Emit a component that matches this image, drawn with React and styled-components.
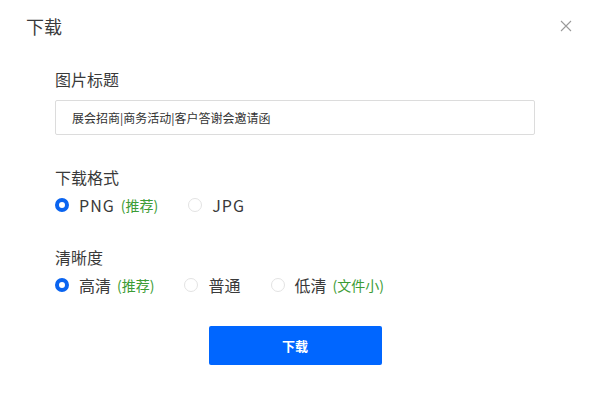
import React, { useState } from "react";
import styled, { createGlobalStyle } from "styled-components";

const Global = createGlobalStyle`
  html, body { margin: 0; padding: 0; background: #fff; }
  body { font-family: "Noto Sans CJK SC", "Noto Sans", sans-serif; color: #333; }
`;

const Dialog = styled.div`
  width: 593px;
  height: 399px;
  box-sizing: border-box;
  padding: 12px 0 0 0;
  display: flex;
  flex-direction: column;
`;

const Header = styled.div`
  display: flex;
  align-items: center;
  justify-content: space-between;
  padding: 0 20px 0 26px;
  height: 28px;
`;

const Title = styled.div`
  font-size: 18px;
  line-height: 28px;
  color: #3a3a3a;
`;

const Close = styled.button`
  border: 0;
  background: none;
  padding: 0;
  width: 14px;
  height: 14px;
  display: flex;
  align-items: center;
  justify-content: center;
  cursor: pointer;
`;

const Body = styled.div`
  padding: 0 58px 0 55px;
  display: flex;
  flex-direction: column;
`;

const Label = styled.div`
  font-size: 16px;
  line-height: 22px;
  color: #3a3a3a;
  margin-top: ${(p) => p.$mt}px;
`;

const Input = styled.input`
  margin-top: 10px;
  height: 35px;
  box-sizing: border-box;
  border: 1px solid #dcdcdc;
  border-radius: 2px;
  padding: 0 16px;
  font-family: inherit;
  font-size: 12px;
  color: #333;
  outline: none;
`;

const RadioRow = styled.div`
  display: flex;
  align-items: center;
  height: 22px;
  margin-top: 6px;
`;

const Option = styled.label`
  display: flex;
  align-items: center;
  margin-right: 30px;
  cursor: pointer;
`;

const Dot = styled.span`
  width: 14px;
  height: 14px;
  box-sizing: border-box;
  border-radius: 50%;
  border: ${(p) => (p.$on ? "4.5px solid #0a64f0" : "1px solid #e3e3e3")};
  background: #fff;
  margin-right: 10px;
  flex: none;
`;

const OptText = styled.span`
  font-size: 16px;
  line-height: 22px;
  color: #3a3a3a;
  letter-spacing: ${(p) => (p.$latin ? "1px" : "0")};
`;

const Tag = styled.span`
  font-size: 14px;
  line-height: 22px;
  color: #3c9c35;
  margin-left: 6px;
`;

const Footer = styled.div`
  display: flex;
  justify-content: center;
  margin-top: 30px;
`;

const Button = styled.button`
  width: 173px;
  height: 39px;
  border: 0;
  border-radius: 2px;
  background: #0066ff;
  color: #fff;
  font-family: inherit;
  font-size: 13px;
  font-weight: 700;
  cursor: pointer;
`;

function RadioGroup({ options, value, onChange }) {
  return (
    <RadioRow>
      {options.map((o) => (
        <Option key={o.value} onClick={() => onChange(o.value)}>
          <Dot $on={value === o.value} />
          <OptText $latin={/^[A-Z]+$/.test(o.label)}>{o.label}</OptText>
          {o.tag && <Tag>{o.tag}</Tag>}
        </Option>
      ))}
    </RadioRow>
  );
}

export default function App() {
  const [fmt, setFmt] = useState("png");
  const [q, setQ] = useState("high");
  return (
    <>
      <Global />
      <Dialog>
        <Header>
          <Title>下载</Title>
          <Close aria-label="close">
            <svg width="12" height="12" viewBox="0 0 12 12">
              <path d="M1 1L11 11M11 1L1 11" stroke="#9a9a9a" strokeWidth="1.1" />
            </svg>
          </Close>
        </Header>
        <Body>
          <Label $mt={28}>图片标题</Label>
          <Input defaultValue="展会招商|商务活动|客户答谢会邀请函" />
          <Label $mt={31}>下载格式</Label>
          <RadioGroup
            value={fmt}
            onChange={setFmt}
            options={[
              { value: "png", label: "PNG", tag: "(推荐)" },
              { value: "jpg", label: "JPG" },
            ]}
          />
          <Label $mt={30}>清晰度</Label>
          <RadioGroup
            value={q}
            onChange={setQ}
            options={[
              { value: "high", label: "高清", tag: "(推荐)" },
              { value: "normal", label: "普通" },
              { value: "low", label: "低清", tag: "(文件小)" },
            ]}
          />
          <Footer>
            <Button>下载</Button>
          </Footer>
        </Body>
      </Dialog>
    </>
  );
}
